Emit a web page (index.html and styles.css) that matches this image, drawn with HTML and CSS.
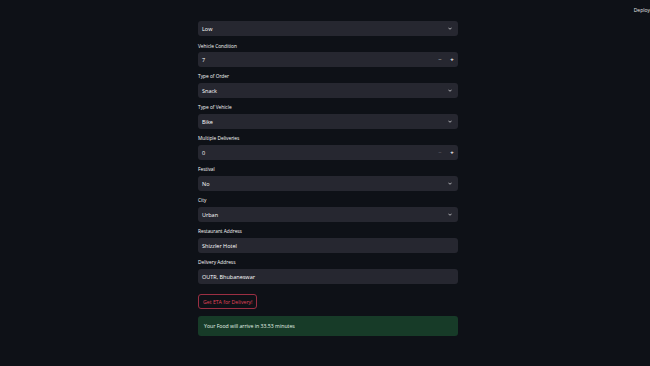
FILE: index.html
```html
<!DOCTYPE html>
<html lang="en">
<head>
    <meta charset="UTF-8">
    <meta name="viewport" content="width=device-width, initial-scale=1.0">
    <title>Food Delivery ETA</title>
    <link rel="stylesheet" href="styles.css">
</head>
<body>
    <header class="toolbar">
        <span class="deploy">Deploy</span>
    </header>

    <main class="form">
        <div class="field">
            <div class="box select">
                <span>Low</span>
                <svg class="chevron" viewBox="0 0 10 6"><path d="M1 1l4 4 4-4" /></svg>
            </div>
        </div>

        <div class="field">
            <label>Vehicle Condition</label>
            <div class="box number">
                <span>7</span>
                <div class="steps">
                    <span class="step">&minus;</span>
                    <span class="step plus">+</span>
                </div>
            </div>
        </div>

        <div class="field">
            <label>Type of Order</label>
            <div class="box select">
                <span>Snack</span>
                <svg class="chevron" viewBox="0 0 10 6"><path d="M1 1l4 4 4-4" /></svg>
            </div>
        </div>

        <div class="field">
            <label>Type of Vehicle</label>
            <div class="box select">
                <span>Bike</span>
                <svg class="chevron" viewBox="0 0 10 6"><path d="M1 1l4 4 4-4" /></svg>
            </div>
        </div>

        <div class="field">
            <label>Multiple Deliveries</label>
            <div class="box number">
                <span>0</span>
                <div class="steps">
                    <span class="step dim">&minus;</span>
                    <span class="step plus">+</span>
                </div>
            </div>
        </div>

        <div class="field">
            <label>Festival</label>
            <div class="box select">
                <span>No</span>
                <svg class="chevron" viewBox="0 0 10 6"><path d="M1 1l4 4 4-4" /></svg>
            </div>
        </div>

        <div class="field">
            <label>City</label>
            <div class="box select">
                <span>Urban</span>
                <svg class="chevron" viewBox="0 0 10 6"><path d="M1 1l4 4 4-4" /></svg>
            </div>
        </div>

        <div class="field">
            <label>Restaurant Address</label>
            <div class="box text">Shizzler Hotel</div>
        </div>

        <div class="field">
            <label>Delivery Address</label>
            <div class="box text">OUTR, Bhubaneswar</div>
        </div>

        <button class="eta-btn">Get ETA for Delivery!</button>

        <div class="success">Your Food will arrive in 33.53 minutes</div>
    </main>
</body>
</html>
```

FILE: styles.css
```css
/* Dark app theme */
body {
    font-family: 'Open Sans', 'Noto Sans', sans-serif;
    background-color: #0e1117;
    color: #fafafa;
    margin: 0;
    padding: 0 0 0 6px;
    height: 366px;
    overflow: hidden;
    position: relative;
}

.toolbar {
    position: absolute;
    top: 6px;
    right: 0;
    font-size: 5px;
    line-height: 8px;
}

.deploy {
    color: #e6e6e6;
}

.form {
    width: 260px;
    margin: 0 auto;
    padding-top: 21px;
    display: flex;
    flex-direction: column;
}

.field {
    display: flex;
    flex-direction: column;
    margin-bottom: 6px;
}

.field label {
    font-size: 4.8px;
    line-height: 7px;
    margin-bottom: 3px;
    color: #fafafa;
}

.field:nth-child(2) label {
    line-height: 8px;
    margin-bottom: 2px;
}

.box {
    height: 15px;
    background-color: #262730;
    border-radius: 3px;
    display: flex;
    align-items: center;
    justify-content: space-between;
    padding: 0 0 0 4px;
    font-size: 5.5px;
    color: #ffffff;
    box-sizing: border-box;
}

.select {
    padding-right: 6px;
}

.chevron {
    width: 4px;
    height: 3px;
    fill: none;
    stroke: #d5d5d8;
    stroke-width: 2;
}

.steps {
    display: flex;
    height: 100%;
}

.step {
    width: 12px;
    display: flex;
    align-items: center;
    justify-content: center;
    font-size: 6px;
    color: #c9c9cc;
}

.step.dim {
    color: #6b6c73;
}

.step.plus {
    color: #ffffff;
    font-weight: 700;
}

.eta-btn {
    align-self: flex-start;
    margin-top: 4px;
    height: 15px;
    padding: 0 4px;
    background: transparent;
    border: 1px solid #9b2f43;
    border-radius: 3px;
    color: #e0445a;
    font-family: inherit;
    font-size: 5.2px;
}

.success {
    margin-top: 7px;
    height: 20px;
    background-color: #173b28;
    border-radius: 3px;
    display: flex;
    align-items: center;
    padding-left: 6px;
    font-size: 5.2px;
    color: #e4f5e9;
}
```
